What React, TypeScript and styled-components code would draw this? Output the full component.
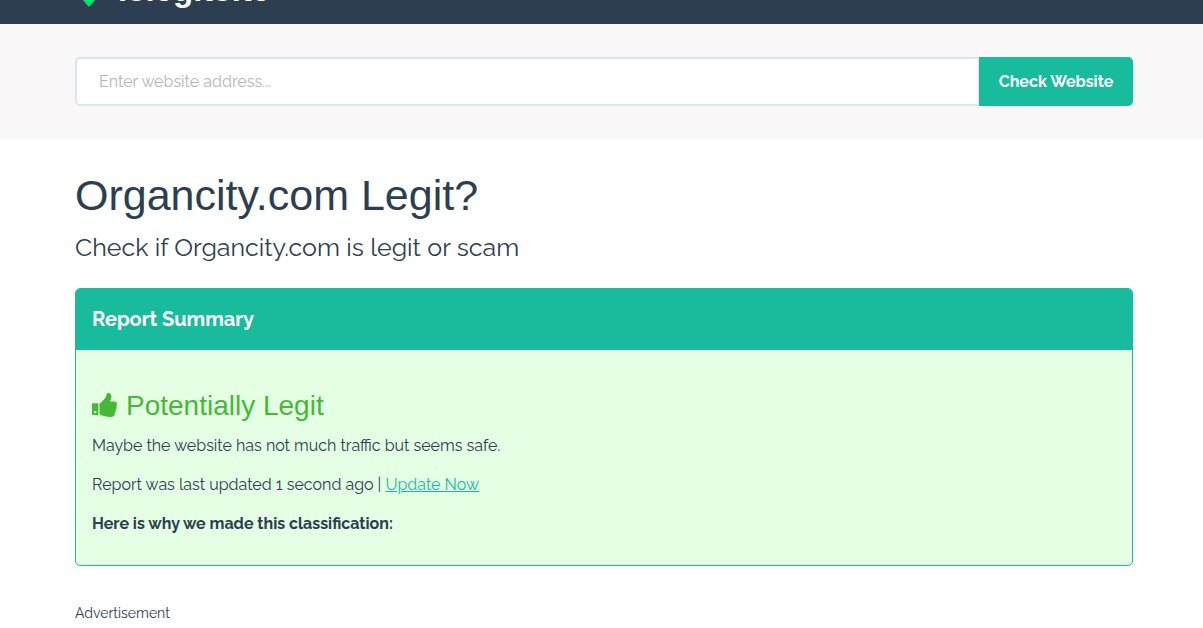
import React from 'react';
import styled, { createGlobalStyle } from 'styled-components';

const ink = '#2c3e50';
const teal = '#18bc9c';
const bodyFont = `Raleway, Lato, "Liberation Sans", sans-serif`;
const headingFont = `"Liberation Sans", Arial, sans-serif`;

const GlobalStyle = createGlobalStyle`
  *, *::before, *::after { box-sizing: border-box; }
  body {
    margin: 0;
    background: #fff;
    color: ${ink};
    font-family: ${bodyFont};
    font-size: 16px;
    line-height: 24px;
  }
`;

const Header = styled.header`
  display: flex;
  align-items: flex-end;
  height: 24px;
  padding: 0 70px 0 75px;
  overflow: hidden;
  background: ${ink};
`;

const Brand = styled.a`
  display: flex;
  align-items: flex-end;
  gap: 22px;
  padding: 0 0 14px 7px;
  color: #fff;
  font-family: ${headingFont};
  font-size: 33px;
  font-weight: 700;
  line-height: 40px;
  text-decoration: none;
`;

const Pin = styled.svg`
  display: block;
  width: 14px;
  height: 24px;
  margin-bottom: 3px;
`;

const SearchBand = styled.section`
  padding: 33px 70px 33px 75px;
  background: #f9f7f8;
`;

const SearchForm = styled.form`
  display: flex;
  height: 49px;
`;

const AddressInput = styled.input`
  flex: 1;
  min-width: 0;
  padding: 0 22px;
  border: 2px solid #dce4ec;
  border-right-width: 1px;
  border-radius: 5px 0 0 5px;
  background: #fff;
  color: ${ink};
  font: inherit;
  &::placeholder { color: #b5b5b5; opacity: 1; }
`;

const CheckButton = styled.button`
  width: 154px;
  padding: 0;
  border: 0;
  border-radius: 0 5px 5px 0;
  background: ${teal};
  color: #fff;
  font: inherit;
  font-weight: 700;
  white-space: nowrap;
`;

const Content = styled.main`
  padding: 32px 70px 0 75px;
`;

const Title = styled.h1`
  margin: 0;
  font: 400 43px/48px ${headingFont};
`;

const Subtitle = styled.h2`
  margin: 12px 0 25px;
  font-size: 25px;
  font-weight: 400;
  line-height: 32px;
`;

const Report = styled.section`
  border: 1px solid ${teal};
  border-radius: 5px;
  background: #e4ffe4;
  overflow: hidden;
`;

const ReportHeading = styled.h3`
  margin: 0;
  padding: 14px 16px 15px;
  background: ${teal};
  color: #fff;
  font-size: 20px;
  font-weight: 700;
  line-height: 32px;
`;

const ReportBody = styled.div`
  padding: 40px 16px 29px;
`;

const Verdict = styled.h4`
  display: flex;
  align-items: flex-start;
  gap: 9px;
  margin: 0 0 12px;
  color: #47b836;
  font: 400 28px/32px ${headingFont};
`;

const ThumbIcon = styled.svg`
  flex: none;
  width: 25px;
  height: 25px;
  margin-top: 3px;
  fill: currentColor;
`;

const Text = styled.p`
  margin: 0 0 15px;
  &:last-child { margin-bottom: 0; }
`;

const UpdateLink = styled.a`
  color: ${teal};
  text-decoration: underline;
`;

const AdLabel = styled.p`
  margin: 35px 0 0;
  font-size: 14px;
  line-height: 24px;
`;

export default function App() {
  return (
    <>
      <GlobalStyle />
      <Header>
        <Brand href="#">
          <Pin viewBox="0 0 14 24" aria-hidden="true">
            <path d="M0 8h14v8L8 23q-1 1-2 0L0 16z" fill="#00e167" />
          </Pin>
          islegitsite
        </Brand>
      </Header>
      <SearchBand>
        <SearchForm onSubmit={(e) => e.preventDefault()}>
          <AddressInput type="text" aria-label="Website address" placeholder="Enter website address..." />
          <CheckButton type="submit">Check Website</CheckButton>
        </SearchForm>
      </SearchBand>
      <Content>
        <Title>Organcity.com Legit?</Title>
        <Subtitle>Check if Organcity.com is legit or scam</Subtitle>
        <Report>
          <ReportHeading>Report Summary</ReportHeading>
          <ReportBody>
            <Verdict>
              <ThumbIcon viewBox="0 0 25 25" aria-hidden="true">
                <path
                  fillRule="evenodd"
                  d="M.7 10.2h5q.7 0 .7.7v10.4q0 .7-.7.7h-5q-.7 0-.7-.7V10.900q0-.7.7-.7zM3.200 17.900a1.200 1.200 0 1 0 0 2.400a1.200 1.200 0 1 0 0-2.400z"
                />
                <path d="M7.500 10.800q0-.6.8-.8c1.700-.7 2.700-2.600 4.200-4.200 1.500-1.300 1.700-2.600 2-4.200.2-1 .7-1.600 1.500-1.600 2.300 0 3.400 1.500 3.400 3.700 0 2.100-.9 3.300-1.500 4.900h4.600c1.500 0 2.500 1.200 2.500 2.500 0 .8-.3 1.400-.7 1.800.7 1.300.5 2.800-.5 3.700.3 1.300-.1 2.500-.9 3.200.2 2.900-1.600 4.200-4.600 4.200-4.500 0-6.300-1.200-9.600-2q-1.200-.1-1.200-.8z" />
              </ThumbIcon>
              Potentially Legit
            </Verdict>
            <Text>Maybe the website has not much traffic but seems safe.</Text>
            <Text>
              Report was last updated 1 second ago | <UpdateLink href="#">Update Now</UpdateLink>
            </Text>
            <Text>
              <strong>Here is why we made this classification:</strong>
            </Text>
          </ReportBody>
        </Report>
        <AdLabel>Advertisement</AdLabel>
      </Content>
    </>
  );
}
